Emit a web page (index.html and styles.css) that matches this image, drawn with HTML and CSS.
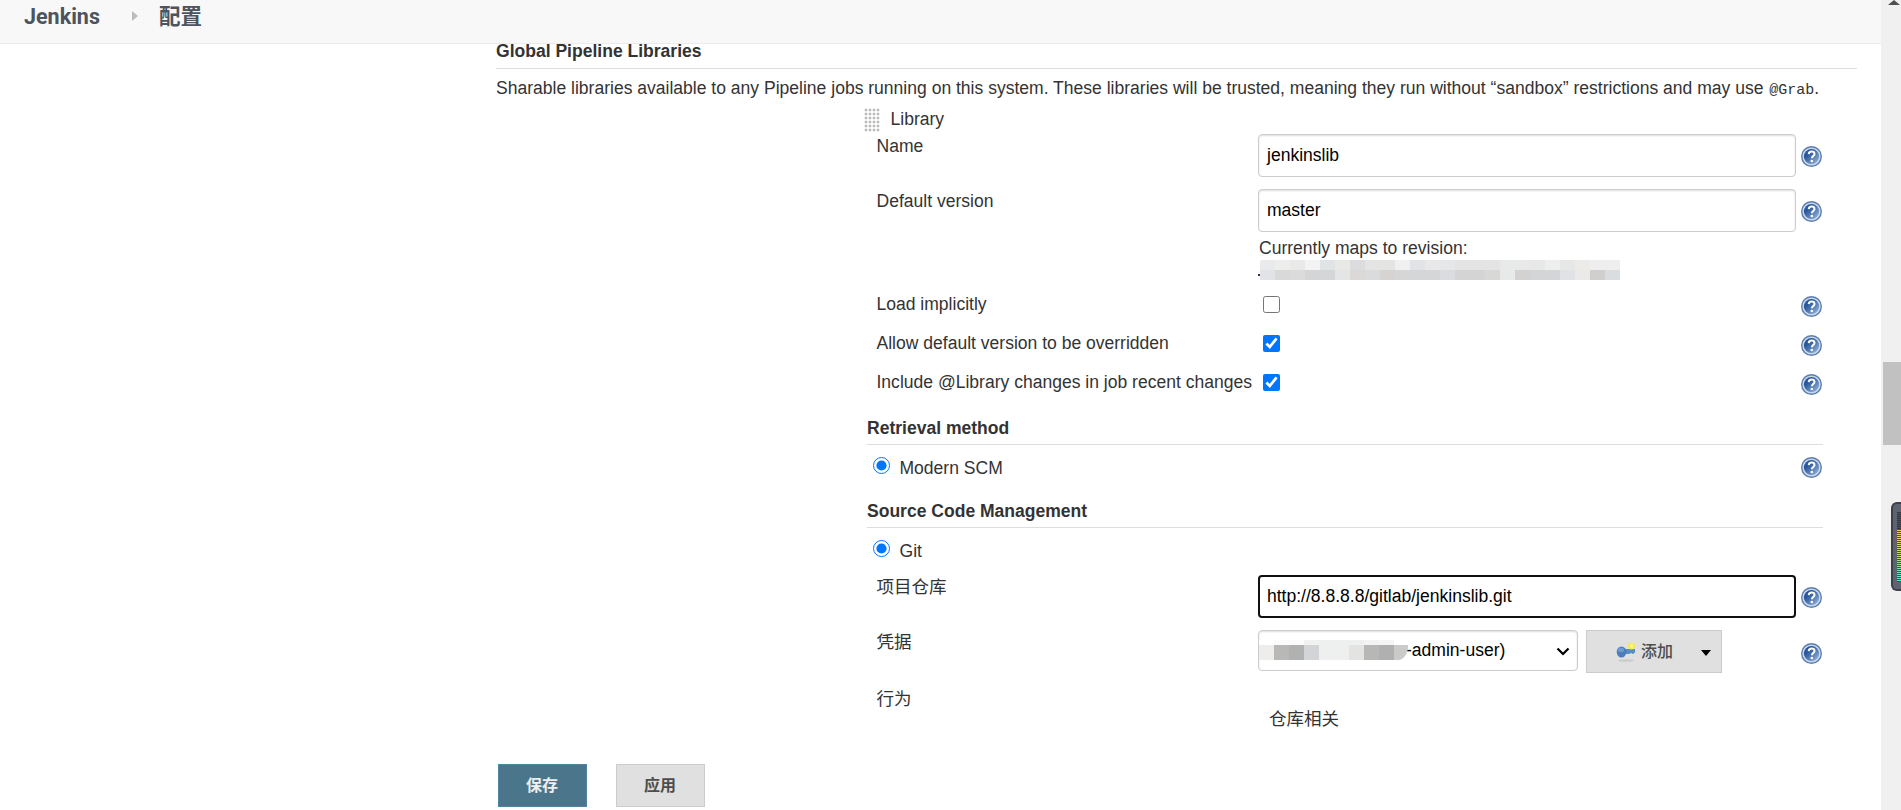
FILE: index.html
```html
<!DOCTYPE html>
<html lang="zh-CN">
<head>
<meta charset="utf-8">
<title>配置 [Jenkins]</title>
<link rel="stylesheet" href="styles.css">
</head>
<body>
<svg class="defs" aria-hidden="true">
  <defs>
    <linearGradient id="hg" x1="0" y1="0" x2="1" y2="1">
      <stop offset=".3" stop-color="#2a5799"/><stop offset="1" stop-color="#9dbbdf"/>
    </linearGradient>
    <symbol id="help" viewBox="0 0 21 21">
      <circle cx="10.5" cy="10.5" r="10.5" fill="#5b7db0"/>
      <circle cx="10.5" cy="10.5" r="9.1" fill="#c9d7ea"/>
      <circle cx="10.5" cy="10.5" r="7.6" fill="url(#hg)"/>
      <path d="M7.7 8.1C7.8 6.2 9 5.5 10.6 5.500c1.800 0 2.900.9 2.900 2.400 0 2.100-2.600 2.300-2.600 4.400" fill="none" stroke="#fff" stroke-width="2"/>
      <circle cx="10.800" cy="15" r="1.300" fill="#fff"/>
    </symbol>
  </defs>
</svg>
<div class="page">
  <div class="content">
    <header class="crumbs">
      <span>Jenkins</span>
      <svg class="crumb-arrow" width="6" height="10" viewBox="0 0 6 10"><path d="M0 0L6 5L0 10z" fill="#bbb"/></svg>
      <span class="crumb-cn">配置</span>
    </header>
    <main class="config">
      <h2 class="heading top">Global Pipeline Libraries</h2>
      <p class="desc">Sharable libraries available to any Pipeline jobs running on this system. These libraries will be trusted, meaning they run without “sandbox” restrictions and may use <code>@Grab</code>.</p>
      <section class="library">
        <div class="library-title"><span class="handle"></span>Library</div>
        <div class="row name"><label>Name</label><div class="box">jenkinslib</div><svg class="help"><use href="#help"/></svg></div>
        <div class="row version"><label>Default version</label>
          <div><div class="box">master</div><p class="revision">Currently maps to revision:</p>
            <svg class="mosaic rev" width="364" height="22" viewBox="0 0 364 22" id="rev"><rect x="0" y="16" width="2" height="2" fill="#333"/></svg></div>
          <svg class="help"><use href="#help"/></svg></div>
        <div class="row check"><label>Load implicitly</label><input type="checkbox"><svg class="help"><use href="#help"/></svg></div>
        <div class="row check"><label>Allow default version to be overridden</label><input type="checkbox" checked><svg class="help"><use href="#help"/></svg></div>
        <div class="row check"><label>Include @Library changes in job recent changes</label><input type="checkbox" checked><svg class="help"><use href="#help"/></svg></div>
        <h2 class="heading">Retrieval method</h2>
        <div class="radio"><input type="radio" checked name="m"><span>Modern SCM</span><svg class="help"><use href="#help"/></svg></div>
        <h2 class="heading">Source Code Management</h2>
        <div class="radio git"><input type="radio" checked name="s"><span>Git</span></div>
        <div class="row repo"><label>项目仓库</label><div class="box focused">http://8.8.8.8/gitlab/jenkinslib.git</div><svg class="help"><use href="#help"/></svg></div>
        <div class="row cred"><label>凭据</label>
          <div class="cred-controls">
            <div class="box select"><svg class="mosaic usr" width="150" height="20" viewBox="0 0 150 20" id="usr"></svg><span>-admin-user)</span>
              <svg class="chevron" width="14" height="9" viewBox="0 0 14 9"><path d="M1.500 1.500L7 7l5.500-5.500" fill="none" stroke="#000" stroke-width="2.200"/></svg></div>
            <div class="btn add">
              <svg class="key" width="20" height="24" viewBox="0 0 20 24">
                <ellipse cx="10" cy="21.500" rx="8" ry="1.300" fill="#cbcbcb"/>
                <path d="M8 10h11v3.500l-2 1.500-2-1-2 1H8z" fill="#5a8cc0"/>
                <ellipse cx="5.500" cy="13" rx="4.800" ry="5.500" fill="#4a7dba"/>
                <ellipse cx="5" cy="11" rx="3.200" ry="2.200" fill="#6d9bcc"/>
                <circle cx="15.500" cy="7" r="3.600" fill="#f4ec54"/><circle cx="15.500" cy="7" r="1.500" fill="#fff99b"/>
              </svg><span>添加</span>
              <svg class="caret" width="10" height="6" viewBox="0 0 10 6"><path d="M0 0h10L5 6z"/></svg>
            </div>
          </div>
          <svg class="help"><use href="#help"/></svg></div>
        <div class="row behaviour"><label>行为</label><p>仓库相关</p></div>
      </section>
      <footer class="actions"><div class="btn save">保存</div><div class="btn apply">应用</div></footer>
    </main>
  </div>
  <aside class="scrollbar"><span class="up"></span><span class="thumb"></span><div class="widget"><i></i></div></aside>
</div>
<script src="mosaic.js"></script>
</body>
</html>
```
FILE: styles.css
```css
* { box-sizing: border-box; }
body { margin: 0; background: #fff; color: #333; font: 17.54px/20px "Liberation Sans", Arial, "Noto Sans CJK SC", sans-serif; overflow: hidden; }
h2, p { margin: 0; font-size: inherit; }
.defs { position: absolute; width: 0; height: 0; }
.page { display: flex; height: 810px; overflow: hidden; }
.content { flex: 1; }
.crumbs { display: flex; height: 44px; padding: 5px 0 0 24px; background: #f8f8f8; border-bottom: 1px solid #ebebeb; font: bold 21.5px/24px Roboto, "Noto Sans CJK SC", sans-serif; color: #4d545d; }
.crumb-arrow { margin: 6px 21px 0 32px; }
.config { padding-left: 496px; }
.heading { height: 40px; padding-top: 13px; border-bottom: 1px solid #ddd; font-weight: bold; }
.heading.top { width: 1361px; height: 25px; padding-top: 0; line-height: 14px; }
.desc { height: 38px; padding-top: 9px; white-space: nowrap; }
.desc code { font: 15px/16px "Liberation Mono", monospace; margin-left: 1px; }
.library { width: 956px; margin-left: 371px; }
.library-title { display: flex; height: 27px; padding-top: 2px; margin-left: -3px; gap: 10.5px; }
.handle { width: 16px; height: 24px; margin-top: -1px; background: radial-gradient(circle, #bdbdbd 1.1px, transparent 1.8px) 0 0 / 4px 4px; }
.row { display: grid; grid-template-columns: 381.5px 538px 1fr; padding-left: 9.5px; align-items: start; }
.row label { padding-top: 2px; white-space: nowrap; }
.help { display: block; width: 21px; height: 21px; margin: 12px 0 0 5px; }
.box { height: 43px; border: 1px solid #ccc; border-radius: 4px; padding: 10px 8px; background: #fff; color: #000; box-shadow: inset 0 1px 2px #ddd; }
.box.focused { border: 2px solid #101010; padding: 9px 7px; box-shadow: none; }
.name { height: 55px; }
.version { height: 99px; }
.revision { padding: 6px 0 0 1px; }
.mosaic { display: block; }
.mosaic.rev { clip-path: inset(0 round 9px 0 0 2px); }
.mosaic.usr { clip-path: inset(0 round 2px 0 10px 2px / 2px 0 14px 2px); }
.check { height: 39px; }
.check label { padding-top: 6px; }
.check input { width: 17px; height: 17px; margin: 8px 0 0 5px; }
.check .help { margin-top: 8px; }
.radio { display: flex; height: 43px; padding-left: 6px; }
.radio input { width: 17px; height: 17px; margin: 12px 9.5px 0 0; }
.radio span { padding-top: 13px; }
.radio .help { margin: 12px 1px 0 auto; }
.radio.git { height: 47px; }
.repo { height: 55px; }
.cred { height: 56px; }
.cred-controls { display: flex; gap: 8px; }
.select { display: flex; width: 320px; height: 41px; padding: 0; }
.select span { padding-top: 9px; margin-left: -2px; }
.select .mosaic { margin: 9px 0 0 -1px; }
.chevron { margin: 16px 7px 0 auto; }
.cred .help { margin-top: 13px; }
.btn { height: 43px; border: 1px solid #ccc; background: #e0e0e0; color: #4d4d4d; font-weight: bold; line-height: 41px; font-size: 16px; text-align: center; }
.add { display: flex; width: 136px; padding-left: 29px; font-weight: 500; }
.key { margin: 8px 5px 0 0; }
.caret { margin: 19px 0 0 28px; }
.behaviour { height: 78px; padding-top: 1px; }
.behaviour p { padding: 22px 0 0 11px; }
.actions { display: flex; gap: 29px; padding-left: 2px; }
.actions .btn { width: 89px; padding-right: 1px; }
.actions .save { background: #4b758b; border-color: #4f87a3; color: #eee; }
.scrollbar { position: relative; width: 20px; background: #f0f0f0; }
.up { display: block; width: 0; margin-left: 7px; border: 6px solid transparent; border-top: 0; border-bottom: 5px solid #505050; }
.thumb { display: block; margin: 357px 0 0 2px; height: 83px; background: #c1c1c1; }
.widget { position: absolute; right: 0; top: 502px; width: 10px; height: 89px; border: 2px solid #3e4049; border-right: 0; border-radius: 6px 0 0 6px; background: #5d6370; }
.widget i { display: block; margin: 8px 0 0 4px; height: 70px; background: repeating-linear-gradient(transparent 0 1px, #4a5052 1px 2px), linear-gradient(#343843 0 18px, #ffc84b 18px, #c9dc54 40px, #4fe8d2 68px); }
```
FILE: mosaic.js
```js
const NS = 'http://www.w3.org/2000/svg';
function cells(id, x, y, w, h, colors) {
  const svg = document.getElementById(id);
  colors.split(' ').forEach((c, i) => {
    const r = document.createElementNS(NS, 'rect');
    r.setAttribute('x', x + i * w); r.setAttribute('y', y);
    r.setAttribute('width', w); r.setAttribute('height', h);
    r.setAttribute('fill', '#' + c);
    r.setAttribute('shape-rendering', 'crispEdges');
    svg.appendChild(r);
  });
}
cells('rev', 2, 2, 15, 10, 'e9eaeb ededeb e9e9e9 f3f3f3 e1e4e4 e8e8e5 dcdcde e4e4e2 e4e4e2 f0f0f1 e1e3e6 e8e8e9 e6e7e9 e4e4e4 e4e4e4 e4e4e4 e7eae9 e7eae9 e8e8e8 ecefee e7e7e7 ecebe8 eeeeef eeeeef');
cells('rev', 2, 12, 15, 10, 'e1e3e6 d9d9d9 dbdbdb d5d5d5 d5d6d8 e5e5e6 dcd8d7 dadbdd d5d4d2 d6d6d6 d5d6d8 d5d6d8 dbdcdf d4d4d4 d4d4d4 d8d8d6 e7eae9 d3d2d0 d4d5d7 d4d5d7 e0e2e5 ebeae8 d0cfcd dadde0');
cells('usr', 1, 0, 15, 5, 'ffffff fbfbfb fbfbfb f1f1f1 eef0f0 eef0f0 eef0f0 f3f3f3 f5f5f5');
cells('usr', 1, 5, 15, 15, 'eeedec b8b8b6 b0b2b1 d3d4d7 efefef eef0f0 e3e3e1 b7b7b5 b0b0b0 cacac8');
```
